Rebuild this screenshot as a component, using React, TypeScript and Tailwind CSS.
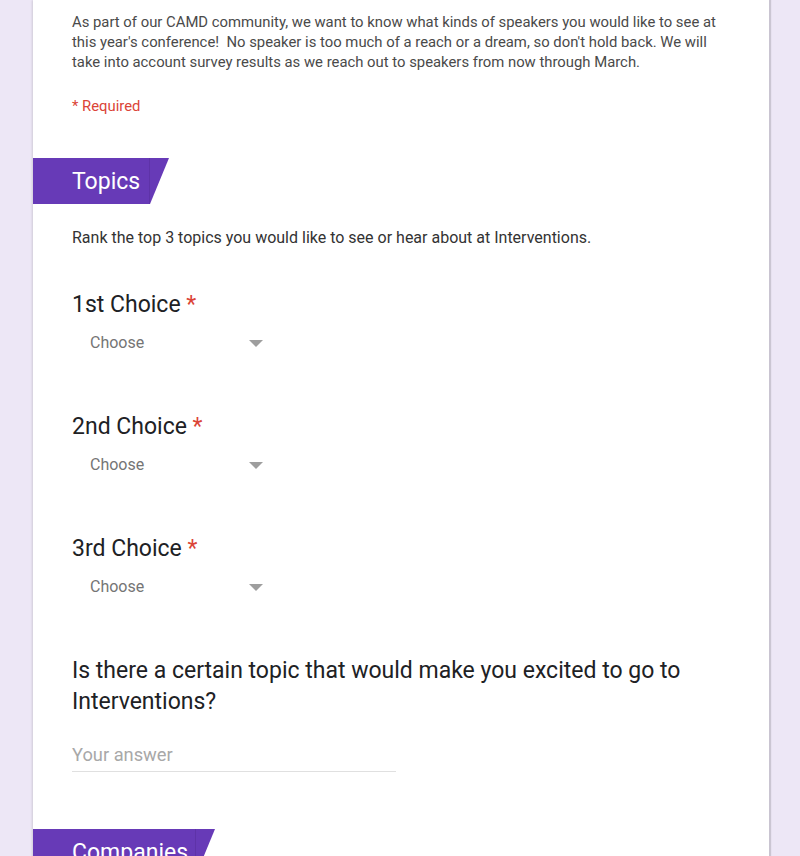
import React from 'react';

function SectionBanner({ title, width }: { title: string; width: string }) {
  return (
    <div className="-ml-[39px] flex h-[46px]">
      <div className={`flex items-center bg-[#673ab7] pl-[39px] border-r border-[#5e33a8] ${width}`}>
        <span className="text-[23px] leading-none text-white">{title}</span>
      </div>
      <svg width="19" height="46" viewBox="0 0 19 46" className="block">
        <polygon points="0,0 19,0 0,46" fill="#673ab7" />
      </svg>
    </div>
  );
}

function Required() {
  return <span className="text-[#db4437]"> *</span>;
}

function ChoiceQuestion({ label }: { label: string }) {
  return (
    <div className="mb-[49px]">
      <div className="text-[23px] leading-[30px] text-[#202124]">
        {label}
        <Required />
      </div>
      <div className="mt-[3px] flex h-[40px] w-[194px] items-center justify-between pl-[18px] pr-[3px]">
        <span className="text-[16px] text-[#757575]">Choose</span>
        <svg width="14" height="7" viewBox="0 0 14 7">
          <polygon points="0,0 14,0 7,7" fill="#9e9e9e" />
        </svg>
      </div>
    </div>
  );
}

export default function App() {
  return (
    <div className="min-h-[856px] bg-[#ede7f6] font-['Roboto',sans-serif]">
      <div className="ml-[33px] min-h-[856px] w-[736px] bg-white pl-[39px] pr-[40px] pt-[12px] shadow-[-1px_0_2px_rgba(0,0,0,0.12),2px_0_1px_rgba(0,0,0,0.14)]">
        <p className="text-[14.85px] leading-[20px] text-[#4a4a4a]">
          As part of our CAMD community, we want to know what kinds of speakers you would like to see at this
          year's conference!&nbsp; No speaker is too much of a reach or a dream, so don't hold back. We will take
          into account survey results as we reach out to speakers from now through March.
        </p>
        <p className="mt-[24px] text-[14.85px] leading-[20px] text-[#db4437]">* Required</p>

        <div className="mt-[42px]">
          <SectionBanner title="Topics" width="w-[117px]" />
        </div>
        <p className="mt-[24px] text-[16px] leading-[20px] text-[#333]">
          Rank the top 3 topics you would like to see or hear about at Interventions.
        </p>

        <div className="mt-[42px]">
          <ChoiceQuestion label="1st Choice" />
          <ChoiceQuestion label="2nd Choice" />
          <ChoiceQuestion label="3rd Choice" />
        </div>

        <div className="-mt-[1px] text-[23px] leading-[31px] text-[#202124]">
          Is there a certain topic that would make you excited to go to Interventions?
        </div>
        <div className="mt-[25px] w-[324px] border-b border-[#e0e0e0] pb-[3px]">
          <span className="text-[18.3px] leading-[26px] text-[#a8a8a8]">Your answer</span>
        </div>

        <div className="mt-[57px]">
          <SectionBanner title="Companies" width="w-[163px]" />
        </div>
      </div>
    </div>
  );
}
